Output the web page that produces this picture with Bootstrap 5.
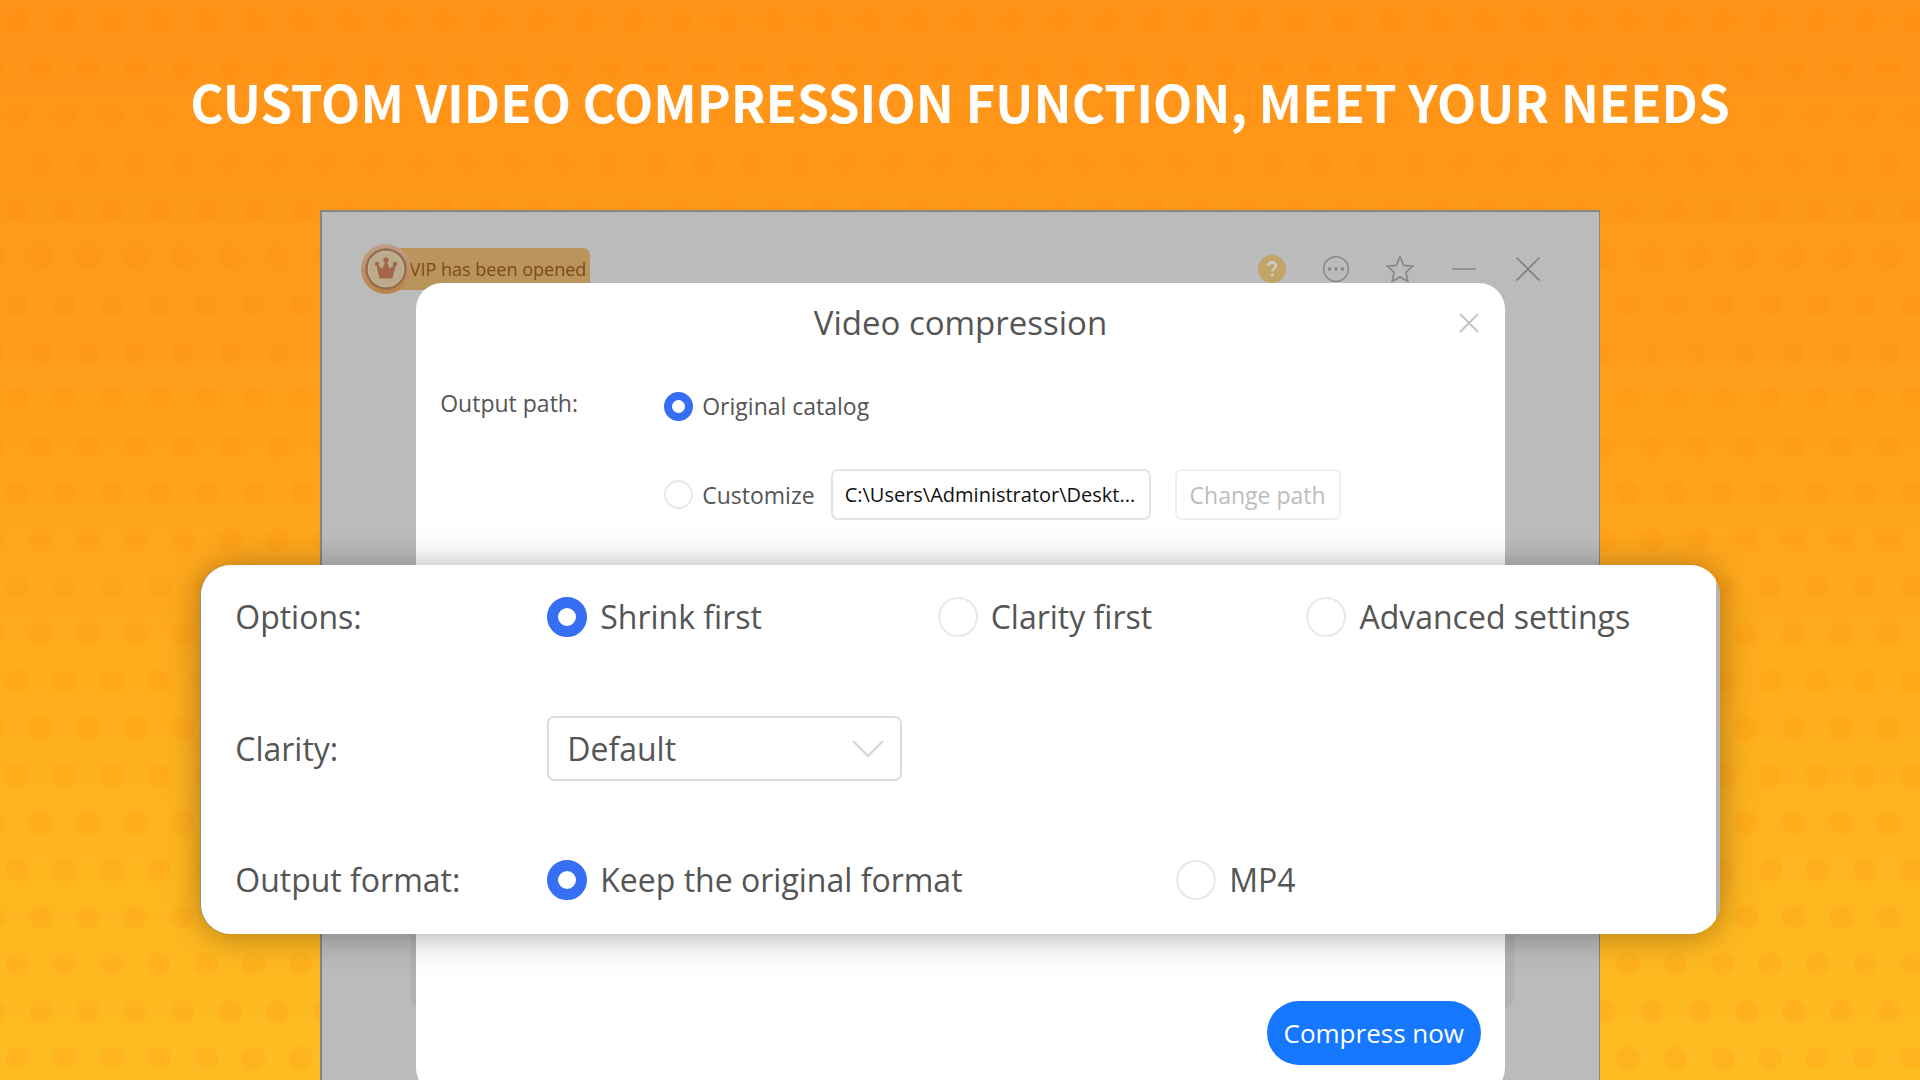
<!DOCTYPE html>
<html lang="en">
<head>
<meta charset="utf-8">
<meta name="viewport" content="width=device-width, initial-scale=1">
<title>Video compression</title>
<link href="https://cdn.jsdelivr.net/npm/bootstrap@5.3.0/dist/css/bootstrap.min.css" rel="stylesheet">
<style>
  body { font-family: "Open Sans", "Noto Sans", sans-serif; color: #555; }
  .stage { height: 100vh; background: linear-gradient(#ff9318, #ff9c1a 30%, #ffb61f 80%, #ffbc22); }
  .dots { z-index: 0; }
  .headline { font: 700 51px/72px "Noto Sans CJK SC", sans-serif; padding-top: 65px; margin-bottom: 73px; }
  .app-window { width: 66.7%; height: 900px; background: #bbb; border: 2px solid #8a8580; border-width: 2px 1px 0 2px; }
  .titlebar { height: 71px; padding: 32px 57px 0 39px; }
  .vip-tag { height: 50px; }
  .vip-text { height: 42px; line-height: 42px; font-size: 18px; color: #7f4a19; background: #ba955b; border-radius: 0 7px 7px 0; margin-left: -25px; padding: 0 4px 0 24px; }
  .icon-btn { width: 28px; height: 28px; padding: 0; border: 0; background: none; line-height: 0; }
  .tools { gap: 36px; padding-top: 11px; }
  .shade { left: 88px; right: 85px; top: 600px; height: 196px; background: #b1b1b1; border-radius: 12px; }
  .dialog-box { width: 85.2%; height: 811px; border-radius: 26px; }
  .dialog-title { font-size: 33px; line-height: 40px; padding-top: 20px; }
  .dialog-close { right: 24px; top: 28px; width: 24px; height: 24px; }
  .path-rows { font-size: 23px; line-height: 32px; padding: 44px 24px 0; height: 222px; }
  .path-label { width: 224px; }
  .path-choices { gap: 47px; padding-top: 3px; }
  .form-check-input.dot { float: none; margin: 0; flex: none; border: 2px solid #e9e9e9; box-shadow: none; background: #fff; }
  .dot-sm { width: 29px; height: 29px; }
  .dot-lg { width: 40px; height: 40px; }
  .form-check-input.dot:checked { border-color: #366ef4; background: #fff; }
  .form-check-input.dot-sm:checked { border-width: 8px; }
  .form-check-input.dot-lg:checked { border-width: 11px; }
  .gap-sm { gap: 9px; }
  .gap-lg { gap: 13px; }
  .path-input { width: 320px; height: 51px; margin-left: 16px; padding: 0 12px; font-size: 20px; color: #111; border: 2px solid #e4e4e4; border-radius: 7px; }
  .path-btn { width: 166px; height: 51px; margin-left: 24px; padding: 0; font-size: 23px; color: #bdbdbd; background: #fff; border: 2px solid #f0f0f0; border-radius: 7px; }
  .options-panel { margin: 0 -215px; height: 369px; padding: 19px 88px 21px 34px; border-radius: 30px; font-size: 32px; line-height: 66px;
    background: linear-gradient(to left, #b4b4b4 4px, #fff 4px); box-shadow: 0 2px 34px rgba(0,0,0,.34), -1px 0 0 #a9a9a9; }
  .options-panel .row-label { width: 312px; flex: none; }
  .choice-a { width: 36%; }
  .choice-b { width: 34%; }
  .choice-wide { width: 58%; }
  .clarity-select { width: 355px; height: 65px; font-size: 32px; line-height: 40px; padding: 0 18px; color: #555; border: 2px solid #ddd; border-radius: 7px;
    background: #fff url("data:image/svg+xml,%3Csvg xmlns='http://www.w3.org/2000/svg' viewBox='0 0 32 18'%3E%3Cpath d='M1 1l15 15L31 1' fill='none' stroke='%23d4d4d4' stroke-width='2'/%3E%3C/svg%3E") no-repeat right 16px center / 32px 18px; }
  .go-btn { width: 214px; height: 64px; margin: 67px 24px 0 0; padding: 0; font-size: 26px; color: #fff; background: #1677ff; border: 0; border-radius: 32px; }
</style>
</head>
<body>
<main class="stage position-relative overflow-hidden">
  <svg class="dots position-absolute top-0 start-0 w-100 h-100" viewBox="0 0 1920 1080" preserveAspectRatio="xMidYMid slice" aria-hidden="true">
    <defs>
      <pattern id="dotgrid" width="47.38" height="94.2" patternUnits="userSpaceOnUse" x="-6.7" y="-1.5">
        <g fill="#ff7a00" fill-opacity=".12">
          <circle cx="23.7" cy="23.5" r="11.7"/>
          <circle cx="0" cy="70.6" r="11.7"/><circle cx="47.38" cy="70.6" r="11.7"/>
        </g>
      </pattern>
    </defs>
    <rect width="1920" height="1080" fill="url(#dotgrid)"/>
  </svg>
  <h1 class="headline position-relative text-center text-white">CUSTOM VIDEO COMPRESSION FUNCTION, MEET YOUR NEEDS</h1>

  <section class="app-window position-relative mx-auto">
    <div class="shade position-absolute"></div>
    <header class="titlebar d-flex justify-content-between align-items-start">
      <div class="vip-tag d-flex align-items-center">
        <svg class="position-relative flex-shrink-0" width="50" height="50" viewBox="0 0 50 50" aria-hidden="true">
          <defs><linearGradient id="rim" x1="0" y1="0" x2="0" y2="1"><stop offset="0" stop-color="#bf9f88"/><stop offset="1" stop-color="#b98448"/></linearGradient></defs>
          <circle cx="25" cy="25" r="25" fill="url(#rim)"/>
          <circle cx="25" cy="25" r="19.5" fill="#c3b496" stroke="#966c50" stroke-width="2.4"/>
          <circle cx="25" cy="25" r="17" fill="#bbab8c"/>
          <g fill="#a5674a"><circle cx="25" cy="16" r="2.7"/><circle cx="16" cy="20" r="2.3"/><circle cx="34" cy="20" r="2.3"/>
          <path d="M15 20l6.500 4.500 3-8h1l3 8 6.500-4.500-3.500 14.500h-13z"/></g>
        </svg>
        <span class="vip-text">VIP has been opened</span>
      </div>
      <nav class="tools d-flex" aria-label="Window">
        <button class="icon-btn" type="button" aria-label="Help"><svg width="28" height="28" viewBox="0 0 28 28"><circle cx="14" cy="14" r="14" fill="#c2a468"/><path d="M10.200 11q.3-3.600 3.900-3.600 3.700.1 3.700 3.300 0 1.700-1.900 3-1.600 1.100-1.600 2.900" fill="none" stroke="#cfcac0" stroke-width="2.600"/><circle cx="14.200" cy="20" r="1.600" fill="#cfcac0"/></svg></button>
        <button class="icon-btn" type="button" aria-label="More"><svg width="28" height="28" viewBox="0 0 28 28"><circle cx="14" cy="14" r="12.300" fill="none" stroke="#888" stroke-width="1.500"/><g fill="#888"><circle cx="7.500" cy="14" r="1.700"/><circle cx="14" cy="14" r="1.700"/><circle cx="20.500" cy="14" r="1.700"/></g></svg></button>
        <button class="icon-btn" type="button" aria-label="Favorite"><svg width="28" height="28" viewBox="0 0 28 28"><path d="M14 2l3.700 8.200 9 1-6.700 6.100 1.900 9.200L14 22l-7.900 4.500L8 17.300 1.300 11.200l9-1z" fill="none" stroke="#858585" stroke-width="1.600"/></svg></button>
        <button class="icon-btn" type="button" aria-label="Minimize"><svg width="28" height="28" viewBox="0 0 28 28"><path d="M2 14h24" stroke="#929292" stroke-width="2"/></svg></button>
        <button class="icon-btn" type="button" aria-label="Close"><svg width="28" height="28" viewBox="0 0 28 28"><path d="M2.500 2.500l23 23m0-23l-23 23" stroke="#808080" stroke-width="1.700"/></svg></button>
      </nav>
    </header>

    <form class="dialog-box position-relative bg-white mx-auto">
      <button class="icon-btn dialog-close position-absolute" type="button" aria-label="Close dialog"><svg width="24" height="24" viewBox="0 0 24 24"><path d="M3 3l18 18m0-18L3 21" stroke="#c4c4c4" stroke-width="2"/></svg></button>
      <h2 class="dialog-title text-center m-0">Video compression</h2>
      <div class="path-rows d-flex">
        <div class="path-label flex-shrink-0" id="path-l">Output path:</div>
        <div class="path-choices d-flex flex-column" role="radiogroup" aria-labelledby="path-l">
          <div class="d-flex align-items-center gap-sm">
            <input class="form-check-input dot dot-sm" type="radio" name="path" id="p1" checked><label for="p1">Original catalog</label>
          </div>
          <div class="d-flex align-items-center">
            <div class="d-flex align-items-center gap-sm"><input class="form-check-input dot dot-sm" type="radio" name="path" id="p2"><label for="p2">Customize</label></div>
            <input class="path-input" type="text" aria-label="Path" value="C:\Users\Administrator\Deskt..." readonly>
            <button class="path-btn" type="button" disabled>Change path</button>
          </div>
        </div>
      </div>

      <div class="options-panel position-relative d-flex flex-column justify-content-between">
        <div class="d-flex align-items-center">
          <div class="row-label" id="opt-l">Options:</div>
          <div class="d-flex flex-grow-1" role="radiogroup" aria-labelledby="opt-l">
            <div class="choice-a d-flex align-items-center gap-lg"><input class="form-check-input dot dot-lg" type="radio" name="opt" id="o1" checked><label for="o1">Shrink first</label></div>
            <div class="choice-b d-flex align-items-center gap-lg"><input class="form-check-input dot dot-lg" type="radio" name="opt" id="o2"><label for="o2">Clarity first</label></div>
            <div class="d-flex align-items-center gap-lg text-nowrap"><input class="form-check-input dot dot-lg" type="radio" name="opt" id="o3"><label for="o3">Advanced settings</label></div>
          </div>
        </div>
        <div class="d-flex align-items-center">
          <label class="row-label" for="clarity">Clarity:</label>
          <select class="form-select clarity-select" id="clarity"><option>Default</option></select>
        </div>
        <div class="d-flex align-items-center">
          <div class="row-label" id="fmt-l">Output format:</div>
          <div class="d-flex flex-grow-1" role="radiogroup" aria-labelledby="fmt-l">
            <div class="choice-wide d-flex align-items-center gap-lg"><input class="form-check-input dot dot-lg" type="radio" name="fmt" id="f1" checked><label for="f1">Keep the original format</label></div>
            <div class="d-flex align-items-center gap-lg"><input class="form-check-input dot dot-lg" type="radio" name="fmt" id="f2"><label for="f2">MP4</label></div>
          </div>
        </div>
      </div>
      <div class="d-flex justify-content-end"><button class="go-btn" type="submit">Compress now</button></div>
    </form>
  </section>
</main>
<script src="https://cdn.jsdelivr.net/npm/bootstrap@5.3.0/dist/js/bootstrap.bundle.min.js"></script>
</body>
</html>
